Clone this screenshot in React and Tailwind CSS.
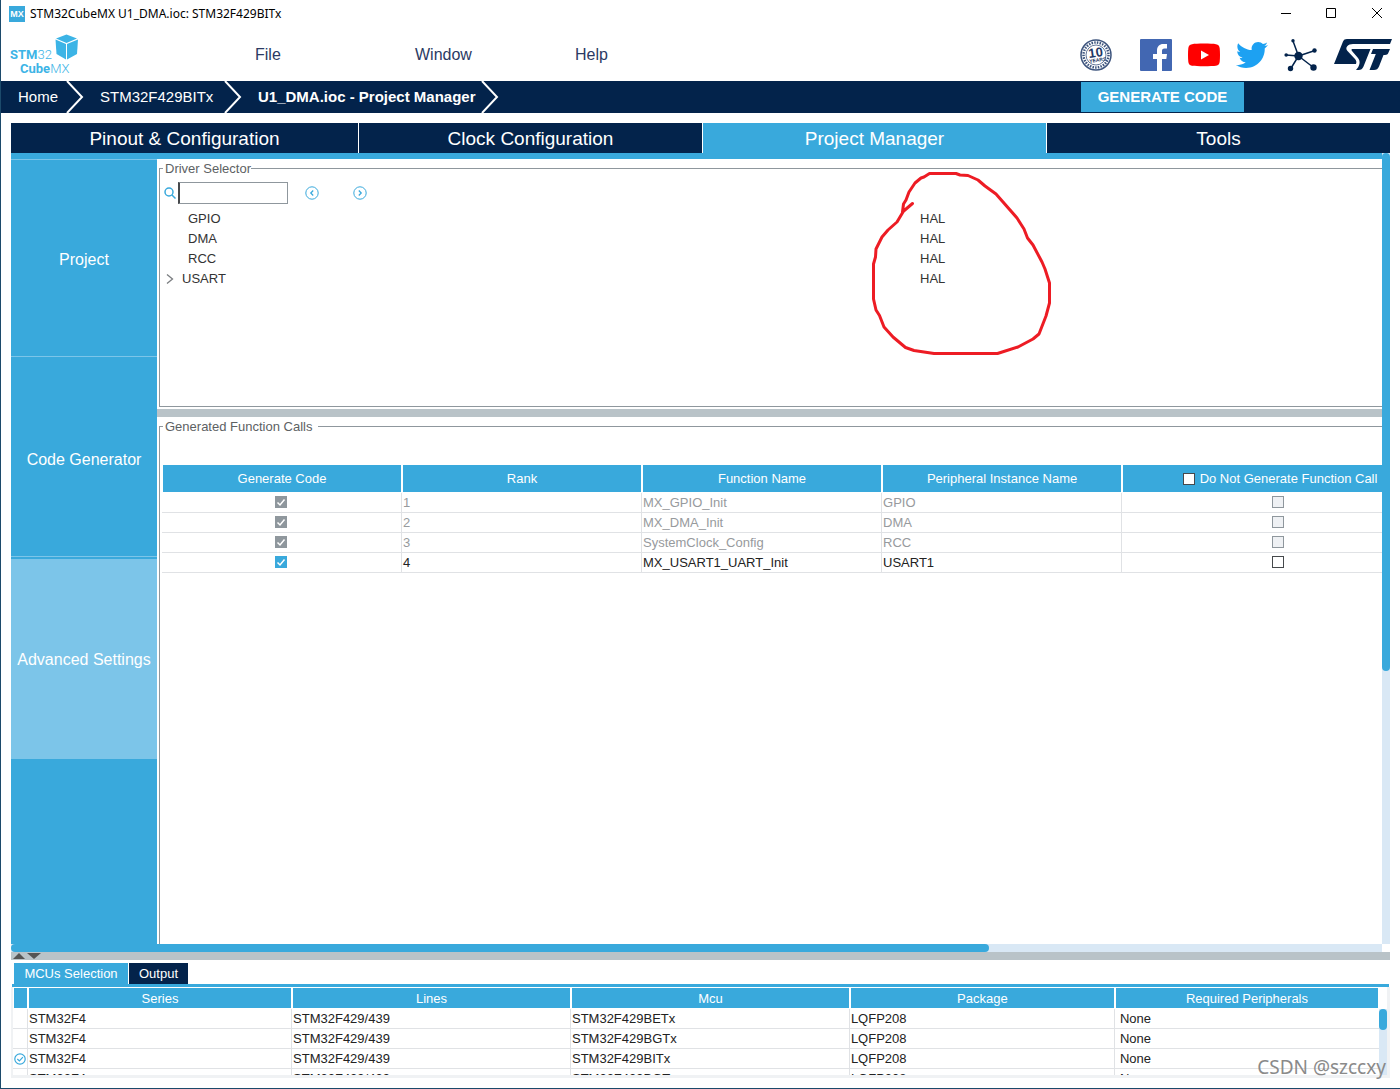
import React from "react";
import { FaTwitter } from "react-icons/fa";

function CubeLogo() {
  return (
    <svg width="70" height="42" viewBox="0 0 70 42" role="img" aria-label="STM32 CubeMX" fill="#3cb4e6">
      <path d="M57.500 0.500 68 4.500 57.500 9 47 4.500z" />
      <path d="M46.500 5.500 57 10V25.500L47.500 20z" />
      <path d="M69 5.500 58 10V25.500L68 20z" />
      <g fontFamily="Roboto, sans-serif" fontSize="13" fontWeight="700">
        <text x="1" y="25">STM<tspan fontWeight="300">32</tspan></text>
        <text x="11" y="39">Cube<tspan fontWeight="300">MX</tspan></text>
      </g>
    </svg>
  );
}

function YearsBadge() {
  return (
    <svg width="32" height="32" viewBox="0 0 32 32" role="img" aria-label="10 years longevity" fill="none" stroke="#3d547d">
      <circle cx="16" cy="16" r="15" strokeWidth="1.500" />
      <circle cx="16" cy="16" r="12.500" strokeWidth="2.500" strokeDasharray="1.500 1.200" />
      <circle cx="16" cy="16" r="10" strokeWidth=".8" />
      <g fill="#1f3864" stroke="none" fontFamily="Liberation Sans, sans-serif" fontWeight="700" textAnchor="middle" transform="rotate(-8 16 16)">
        <text x="16" y="18" fontSize="13">10</text>
        <text x="17" y="23" fontSize="5">YEARS</text>
      </g>
    </svg>
  );
}

function FacebookLogo() {
  return (
    <svg width="32" height="32" viewBox="0 0 32 32" role="img" aria-label="Facebook">
      <rect width="32" height="32" rx="1" fill="#4267b2" />
      <path d="M17 32V20h-4v-5h4v-3.500C17 7.500 19.500 5 23.300 5H27v4.500h-2.500C22.500 9.500 22 10.500 22 12v3h5l-.7 5H22v12z" fill="#fff" />
    </svg>
  );
}

function YoutubeLogo() {
  return (
    <svg width="32" height="24" viewBox="0 0 32 24" role="img" aria-label="YouTube">
      <path d="M4 1.200C8 .4 24 .4 28 1.200c2.500.5 3.400 1.800 3.700 4 .4 4 .4 9.600 0 13.600-.3 2.200-1.200 3.500-3.700 4-4 .6-20 .6-24 0C1.500 22.300.6 21 .3 18.800c-.4-4-.4-9.600 0-13.600C.6 3 1.500 1.700 4 1.200z" fill="#f00" />
      <path d="M13 7.500v9l8-4.500z" fill="#fff" />
    </svg>
  );
}

function NetworkLogo() {
  return (
    <svg width="34" height="34" viewBox="0 0 34 34" role="img" aria-label="Community" fill="#03234b" stroke="#03234b" strokeWidth="1.500">
      <path d="M9 3 14.500 18M2 17l12.500 1M31 12.500 14.500 18M6.500 31l8-13M29.500 29.500l-15-11.500" />
      <g stroke="none">
        <circle cx="14.500" cy="18" r="4.200" />
        <circle cx="9" cy="2.800" r="1.700" />
        <circle cx="2.200" cy="17" r="1.800" />
        <circle cx="30.500" cy="12.500" r="2.200" />
        <circle cx="6.500" cy="30.500" r="2.700" />
        <circle cx="29.500" cy="29.500" r="3.200" />
      </g>
    </svg>
  );
}

function StLogo() {
  return (
    <svg width="58" height="32" viewBox="0 0 58 32" role="img" aria-label="ST" fill="#03234b">
      <path d="M0 25 9 2.500C9.700.8 11 0 13 0h45l-2 5H19c-5 0-8.500 3.500-5.500 7l7.500 8c1.500 1.700 1.700 3.300 1 5z" />
      <path d="M18 10h18.500L29.500 27.500C28.500 30 27 31 24.500 31H22c3.500-3.500 5-8.500 2-12l-6-7c-.7-1-.7-1.500 0-2z" />
      <path d="M39 10h17l-1.500 3.500C53.800 15.300 52.700 16 51 16h-1.500L45 27.500C44 30 42.500 31 40 31h-4.500L41.800 15H37z" />
    </svg>
  );
}

function Chevron() {
  return (
    <svg className="h-8 w-[18px] shrink-0" viewBox="0 0 18 32" fill="none" stroke="#fff" strokeWidth="2" aria-hidden="true">
      <path d="M1 0 16 16 1 32" />
    </svg>
  );
}

function Check({ checked, disabled, label }) {
  const tone = disabled
    ? "border-[#8f979d] bg-[#eff1f4] checked:bg-[#8f979d]"
    : "border-[#46494c] bg-white checked:border-[#39a9dc] checked:bg-[#39a9dc]";
  return (
    <span className="relative block size-3">
      <input type="checkbox" aria-label={label} defaultChecked={checked} disabled={disabled} className={`peer block size-3 appearance-none border ${tone}`} />
      <svg className="pointer-events-none absolute inset-0 hidden size-3 peer-checked:block" viewBox="0 0 12 12" fill="none" stroke="#fff" strokeWidth="1.500" aria-hidden="true">
        <path d="M2.500 6.500 5 9 9.500 3.500" />
      </svg>
    </span>
  );
}

const TABS = ["Pinout & Configuration", "Clock Configuration", "Project Manager", "Tools"];

const CALLS = [
  ["1", "MX_GPIO_Init", "GPIO", true],
  ["2", "MX_DMA_Init", "DMA", true],
  ["3", "SystemClock_Config", "RCC", true],
  ["4", "MX_USART1_UART_Init", "USART1", false],
];

const MCUS = [
  ["STM32F429BETx", false],
  ["STM32F429BGTx", false],
  ["STM32F429BITx", true],
  ["STM32F429BGTx", false],
];

const DRIVERS = ["GPIO", "DMA", "RCC", "USART"];

function TitleBar() {
  return (
    <div className="flex h-[27px] shrink-0 items-center pl-2">
      <span className="flex size-4 items-center justify-center bg-[#39a9dc] text-[9px] font-bold text-white">MX</span>
      <h1 className="ml-[5px] flex-1 font-['Noto_Sans',sans-serif] text-xs text-black">STM32CubeMX U1_DMA.ioc: STM32F429BITx</h1>
      <div className="flex gap-[23px] pr-3">
        {[
          ["Minimize", "M5 10.500h10"],
          ["Maximize", "M5.500 5.500h9v9h-9z"],
          ["Close", "M6 5l10 10M16 5L6 15"],
        ].map(([name, d]) => (
          <button key={name} aria-label={name} className="size-[22px]">
            <svg className="size-[22px]" viewBox="0 0 22 22" fill="none" stroke="#000" aria-hidden="true"><path d={d} /></svg>
          </button>
        ))}
      </div>
    </div>
  );
}

function MenuBar() {
  return (
    <div className="flex h-[54px] shrink-0 items-center pt-0.5 pl-2 text-base text-[#2b3a63]">
      <div className="w-[246px]"><CubeLogo /></div>
      <nav className="flex flex-1">
        <button className="w-40 text-left">File</button>
        <button className="w-40 text-left">Window</button>
        <button className="text-left">Help</button>
      </nav>
      <div className="flex items-center gap-4 pr-2">
        <a href="#years" className="mr-3"><YearsBadge /></a>
        <a href="#facebook"><FacebookLogo /></a>
        <a href="#youtube"><YoutubeLogo /></a>
        <a href="#twitter" aria-label="Twitter"><FaTwitter className="size-8 text-[#1da1f2]" /></a>
        <a href="#community"><NetworkLogo /></a>
        <a href="#st"><StLogo /></a>
      </div>
    </div>
  );
}

function Breadcrumb() {
  return (
    <div className="flex h-8 shrink-0 items-center bg-[#03234b] pl-[17px] text-[15px] text-white">
      <nav className="flex flex-1 items-center">
        <a href="#home" className="w-12">Home</a>
        <Chevron />
        <a href="#mcu" className="ml-4 w-[124px]">STM32F429BITx</a>
        <Chevron />
        <a href="#project" className="ml-4 w-[223px] font-bold">U1_DMA.ioc - Project Manager</a>
        <Chevron />
      </nav>
      <button className="mr-[156px] h-[30px] w-[163px] bg-[#39a9dc] font-bold">GENERATE CODE</button>
    </div>
  );
}

function Sidebar() {
  return (
    <nav className="flex w-[146px] shrink-0 flex-col bg-[#39a9dc] text-base text-white">
      <button className="h-[197px] border-t border-[#7cc5e9] pt-1">Project</button>
      <button className="h-[200px] border-t border-[#7cc5e9] pt-1.5">Code Generator</button>
      <div className="border-t border-[#7cc5e9] pt-0.5">
        <button className="h-[200px] w-full bg-[#7cc5e9] pt-0.5 whitespace-nowrap">Advanced Settings</button>
      </div>
    </nav>
  );
}

function DriverSelector() {
  return (
    <fieldset className="relative ml-0.5 h-[248px] min-w-0 shrink-0 border border-r-0 border-[#8f979d]">
      <legend className="ml-[3px] h-[19px] pl-0.5 leading-[19px] text-[#5d6163]">Driver Selector</legend>
      <div className="mt-1 flex h-[22px] items-center pl-1">
        <label htmlFor="driver-search" aria-label="Search driver">
          <svg className="mr-0.5 size-3" viewBox="0 0 12 12" fill="none" stroke="#39a9dc" strokeWidth="1.500" aria-hidden="true">
            <circle cx="5" cy="5" r="4" /><path d="m8 8 3.500 3.500" />
          </svg>
        </label>
        <input id="driver-search" className="h-[22px] w-[110px] border border-l-2 border-[#8f979d] border-l-[#46494c] px-1 outline-none" />
        <button aria-label="Previous" className="ml-[17px] size-3.5">
          <svg className="size-3.5" viewBox="0 0 14 14" fill="none" stroke="#39a9dc" aria-hidden="true"><circle cx="7" cy="7" r="6.200" /><path d="M8.200 4.500 5.800 7l2.400 2.500" strokeWidth="1.300" /></svg>
        </button>
        <button aria-label="Next" className="ml-[34px] size-3.5">
          <svg className="size-3.5" viewBox="0 0 14 14" fill="none" stroke="#39a9dc" aria-hidden="true"><circle cx="7" cy="7" r="6.200" /><path d="M5.800 4.500 8.200 7 5.800 9.500" strokeWidth="1.300" /></svg>
        </button>
      </div>
      <ul className="mt-[5px] text-[#333]">
        {DRIVERS.map((name) => (
          <li key={name} className="grid h-5 grid-cols-[760fr_462fr] leading-5">
            {name === "USART" ? (
              <button className="flex items-center gap-2 pl-1.5 text-left">
                <svg className="h-3 w-2" viewBox="0 0 8 12" fill="none" stroke="#7a7d80" strokeWidth="1.300" aria-hidden="true"><path d="m1 1.500 5.500 4.500L1 10.500" /></svg>
                {name}
              </button>
            ) : (
              <span className="pl-7">{name}</span>
            )}
            <span>HAL</span>
          </li>
        ))}
      </ul>
      <svg className="pointer-events-none absolute -top-2 left-[710px] h-[190px] w-[184px]" viewBox="870 170 184 190" fill="none" stroke="#ed1c24" strokeWidth="3" strokeLinejoin="round" strokeLinecap="round" aria-hidden="true">
        <path d="M912.500 203.500 902.500 212 903.500 204 906 200 909 192 915 183 921 178 924 177 929.500 173.500H956L960 175 968 175.500 978 180 985 186 996 194 1017 218 1024 229 1027.500 238 1033 245 1042 262 1045 269 1049.500 283V303L1046 316 1039 334 1033 339 1018 347 997.500 353.500H934L914 350.500 905.500 347.500 893 337 884 327 879.500 315.500 876 310 873.500 299V264L875.500 257 876 249 879 243 882 237 888 230 897 222 903 212" />
      </svg>
    </fieldset>
  );
}

function FunctionCalls() {
  const th = "h-7 border-x border-b border-white bg-[#39a9dc] p-0 font-normal text-white";
  const td = "h-5 border-b border-[#e0e2e5] p-0";
  return (
    <fieldset className="ml-0.5 min-h-0 min-w-0 flex-1 border-t border-l border-[#8f979d]">
      <legend className="ml-[3px] h-[19px] pr-1.5 pl-0.5 leading-[19px] text-[#5d6163]">Generated Function Calls</legend>
      <div className="mt-[29px] ml-0.5 overflow-hidden">
        <table className="w-[calc(100%+52px)] table-fixed border-separate border-spacing-0 text-left">
          <colgroup>
            <col className="w-[18.87%]" /><col className="w-[18.87%]" /><col className="w-[18.87%]" /><col className="w-[18.87%]" /><col />
          </colgroup>
          <thead>
            <tr className="text-center">
              <th className={th}>Generate Code</th>
              <th className={th}>Rank</th>
              <th className={th}>Function Name</th>
              <th className={th}>Peripheral Instance Name</th>
              <th className={th}>
                <label className="flex items-center justify-center gap-[5px] pl-1"><Check label="Do Not Generate Function Call" />Do Not Generate Function Call</label>
              </th>
            </tr>
          </thead>
          <tbody>
            {CALLS.map(([rank, fn, inst, locked]) => (
              <tr key={rank} className={locked ? "text-[#979a9d]" : "text-[#222]"}>
                <td className={`${td} border-r`}>
                  <div className="flex justify-center pr-0.5 pb-0.5"><Check checked disabled={locked} label={`Generate code for ${fn}`} /></div>
                </td>
                <td className={`${td} border-r pl-px`}>{rank}</td>
                <td className={`${td} border-r pl-px`}>{fn}</td>
                <td className={`${td} border-r pl-px`}>{inst}</td>
                <td className={td}>
                  <div className="flex justify-center pb-0.5"><Check disabled={locked} label={`Do not generate call of ${fn}`} /></div>
                </td>
              </tr>
            ))}
          </tbody>
        </table>
      </div>
    </fieldset>
  );
}

function McuPanel() {
  const th = "h-[21px] border-x border-b border-white bg-[#39a9dc] p-0 pt-0.5 font-normal text-white";
  const td = "h-5 border-r border-b border-[#e0e2e5] p-0 pl-px";
  return (
    <section className="relative shrink-0 pt-[3px]">
      <div className="flex h-[21px] gap-px pl-[3px] text-white">
        <button className="w-[114px] bg-[#39a9dc]">MCUs Selection</button>
        <button className="w-[59px] bg-[#03234b]">Output</button>
      </div>
      <div className="mr-px ml-px h-[3px] bg-[#39a9dc]" />
      <div className="flex h-[91px] overflow-hidden border-r-[3px] border-b-[3px] border-l-2 border-[#f0f2f4] pt-px">
        <div className="min-w-0 flex-1">
          <table className="w-full table-fixed border-separate border-spacing-0 text-left text-[#222]">
            <colgroup>
              <col className="w-[15px]" /><col className="w-[19.33%]" /><col className="w-[20.42%]" /><col className="w-[20.42%]" /><col className="w-[19.4%]" /><col />
            </colgroup>
            <thead>
              <tr className="text-center">
                <th className={th} aria-label="Selected" />
                {["Series", "Lines", "Mcu", "Package", "Required Peripherals"].map((h) => <th key={h} className={th}>{h}</th>)}
              </tr>
            </thead>
            <tbody>
              {MCUS.map(([mcu, selected], i) => (
                <tr key={i}>
                  <td className={td}>
                    {selected && (
                      <svg className="size-3" viewBox="0 0 12 12" fill="none" stroke="#39a9dc" strokeWidth="1.200" role="img" aria-label="Selected">
                        <circle cx="6" cy="6" r="5.200" /><path d="M3.300 6 5.400 8l3.500-3.800" />
                      </svg>
                    )}
                  </td>
                  <td className={td}>STM32F4</td>
                  <td className={td}>STM32F429/439</td>
                  <td className={td}>{mcu}</td>
                  <td className={td}>LQFP208</td>
                  <td className="h-5 border-b border-[#e0e2e5] p-0 pl-[5px]">None</td>
                </tr>
              ))}
            </tbody>
          </table>
        </div>
        <div className="mt-[21px] w-2 bg-[#d9e8f5]"><div className="h-[21px] rounded-full bg-[#39a9dc]" /></div>
      </div>
      <div className="absolute right-1 bottom-0.5 font-['Noto_Sans',sans-serif] text-[19px] text-[#8a8a8a]">CSDN @szccxy</div>
    </section>
  );
}

export default function App() {
  return (
    <div className="flex h-screen flex-col overflow-hidden border-b border-l border-[#1c4a6b] bg-white font-['Liberation_Sans',Arial,sans-serif] text-[13px] leading-[18px]">
      <TitleBar />
      <MenuBar />
      <Breadcrumb />
      <main className="flex min-h-0 flex-1 flex-col px-2.5 py-2.5">
        <div className="grid h-[30px] shrink-0 grid-cols-[347fr_343fr_343fr_343fr] gap-px text-[19px] text-white">
          {TABS.map((t) => (
            <button key={t} className={t === "Project Manager" ? "bg-[#39a9dc] pt-0.5" : "bg-[#03234b] pt-0.5"}>{t}</button>
          ))}
        </div>
        <div className="flex min-h-0 flex-1">
          <div className="flex min-w-0 flex-1 border-t-[6px] border-[#39a9dc]">
            <Sidebar />
            <div className="flex min-w-0 flex-1 flex-col">
              <DriverSelector />
              <div className="mt-0.5 h-2 shrink-0 bg-[#b9c3c8]" />
              <FunctionCalls />
            </div>
          </div>
          <div className="w-2 bg-[#d9e8f5]"><div className="h-[65.5%] rounded-full bg-[#39a9dc]" /></div>
        </div>
        <div className="mr-2 h-2 shrink-0 bg-[#d9e8f5]"><div className="h-2 w-[71.3%] rounded-full bg-[#39a9dc]" /></div>
        <div className="flex h-2 shrink-0 items-center gap-0.5 bg-[#b9c3c8] pl-0.5">
          <svg className="h-2 w-3" viewBox="0 0 12 8" fill="#555" aria-hidden="true"><path d="M0 7 6 1l6 6z" /></svg>
          <svg className="h-2 w-3.5" viewBox="0 0 14 8" fill="#555" aria-hidden="true"><path d="M0 1h14L7 7z" /></svg>
        </div>
        <McuPanel />
      </main>
    </div>
  );
}
